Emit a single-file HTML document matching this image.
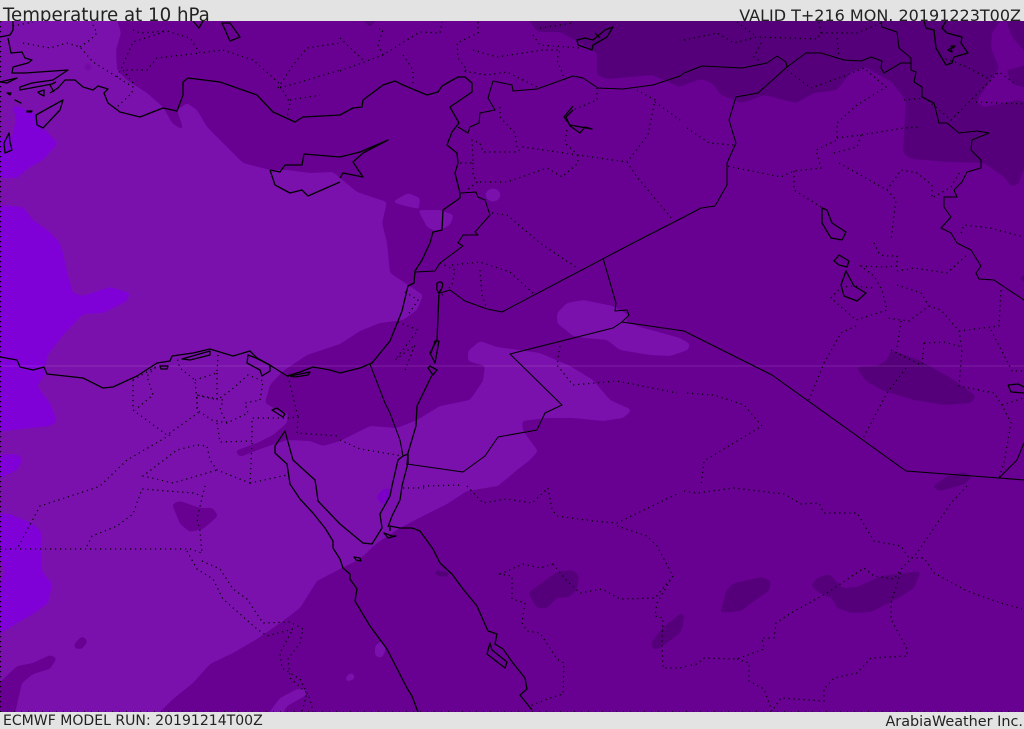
<!DOCTYPE html>
<html><head><meta charset="utf-8"><title>Temperature at 10 hPa</title>
<style>
html,body{margin:0;padding:0;background:#e3e3e3;width:1024px;height:729px;overflow:hidden}
svg{display:block}
text{font-family:"DejaVu Sans","Liberation Sans",sans-serif;fill:#222}
.c{fill:none;stroke:#000;stroke-width:1.3;stroke-linejoin:round}
.t{fill:none;stroke:#000;stroke-width:1.05;stroke-linejoin:round}
.d{fill:none;stroke:#000;stroke-width:1.25;stroke-dasharray:1.2 3.8}
</style></head><body>
<svg width="1024" height="729" viewBox="0 0 1024 729" xmlns="http://www.w3.org/2000/svg">
<defs>
<filter id="s" x="-5%" y="-5%" width="110%" height="110%" color-interpolation-filters="sRGB">
<feGaussianBlur stdDeviation="1.8"/>
<feComponentTransfer><feFuncA type="linear" slope="8" intercept="-3.5"/></feComponentTransfer>
</filter>
</defs>
<rect width="1024" height="729" fill="#e3e3e3"/>
<text x="3" y="21" font-size="18.2">Temperature at 10 hPa</text>
<text x="1021" y="21" font-size="16" text-anchor="end">VALID T+216 MON. 20191223T00Z</text>
<svg x="0" y="21" width="1024" height="691" viewBox="0 21 1024 691">
<rect x="0" y="21" width="1024" height="691" fill="#680092"/>
<!-- dark band -->
<g fill="#55007a" filter="url(#s)">
<polygon points="520,10 538,32 560,32 580,43 597,53 597,75 607,79 630,77 652,75 680,87 684,85 701,79 712,83 721,95 742,103 764,95 796,103 814,93 837,90 851,72 866,67 891,82 906,100 903,153 911,159 951,162 984,163 1004,177 1012,187 1019,183 1034,140 1034,10"/>
<polygon points="355,10 385,10 370,28"/>
<polygon points="1034,270 1018,278 1034,288"/>
<polygon points="891,350 919,360 951,378 976,396 971,403 944,405 914,400 884,391 866,381 856,367 877,366 887,360"/>
<polygon points="932,487 947,476 964,472 972,476 965,484 940,491"/>
<polygon points="720,613 727,589 734,583 762,577 771,581 769,591 754,601 741,611"/>
<polygon points="811,586 817,578 829,574 836,581 842,588 857,587 881,576 921,571 914,588 897,599 871,612 851,613 837,608 832,598 821,594"/>
<polygon points="528,593 540,584 557,572 573,570 579,576 577,589 570,597 557,598 547,608 537,608"/>
<polygon points="651,643 662,628 680,614 684,613 683,625 680,633 660,648 653,650"/>
<polygon points="435,570 449,572 449,577 436,576"/>
</g>
<!-- main colour lobe top right -->
<polygon fill="#680092" filter="url(#s)" points="1004,15 992,33 991,48 999,68 976,102 984,107 1004,103 1017,100 1034,104 1034,90 1012,84 1006,70 1016,68 1034,62 1012,37"/>
<!-- light region -->
<g fill="#7a11ad" filter="url(#s)">
<polygon points="-10,10 114,10 121,33 116,50 117,70 127,80 147,93 163,107 172,123 184,131 177,110 187,103 197,110 207,127 227,147 243,163 270,170 287,170 310,173 333,172 340,178 357,192 387,202 382,223 387,243 390,273 408,285 423,295 417,310 403,320 380,323 360,331 340,344 307,355 283,371 270,385 265,403 277,410 288,413 287,423 273,435 257,443 235,451 240,457 263,448 287,440 310,441 323,446 340,441 370,426 397,428 417,420 440,406 470,400 483,381 485,366 468,361 468,351 480,341 497,347 540,353 570,366 593,380 610,400 632,410 623,418 603,421 573,418 547,418 522,421 523,431 538,451 530,460 517,470 498,486 467,491 447,504 423,516 400,528 377,543 360,559 340,569 317,581 300,608 283,621 257,639 233,653 210,664 193,683 173,699 150,722 -10,722"/>
<polygon points="392,202 408,193 420,198 419,209 405,206"/>
<polygon points="418,210 440,210 454,215 450,225 437,232 427,227"/>
<ellipse cx="493" cy="195" rx="7.5" ry="6.5"/>
<polygon points="557,313 567,303 583,300 613,306 629,315 625,321 640,327 680,338 690,344 688,350 670,356 650,355 620,350 607,340 585,338 573,336 557,323"/>
<polygon points="262,722 280,698 297,689 308,690 305,696 287,706 278,722"/>
<polygon points="375,646 382,640 386,649 382,658 375,656"/>
<polygon points="346,676 353,672 355,679 346,682"/>
</g>
<!-- bright -->
<g fill="#8000d8" filter="url(#s)">
<polygon points="13,105 16,120 12,137 -10,139 -10,178 17,178 30,167 43,160 58,143 43,128 33,112"/>
<polygon points="-10,204 23,207 33,220 50,232 60,243 63,253 68,276 73,293 83,296 110,287 130,293 127,301 103,313 83,314 63,335 47,356 45,375 37,386 50,403 57,421 50,426 20,429 -10,433"/>
<polygon points="-10,455 17,454 23,460 17,470 -10,483"/>
<polygon points="-10,513 10,514 33,524 41,531 42,571 52,584 48,603 33,614 17,623 -10,640"/>
<polygon points="376,497 383,489 391,488 390,499 382,505" fill="#7a00c8"/>
</g>
<polygon points="0,559 5,572 0,584" fill="#7a11ad"/>
<!-- mid blobs on light -->
<g fill="#680092" filter="url(#s)">
<polygon points="172,504 180,501 200,508 213,508 218,516 203,529 190,532 180,524"/>
<polygon points="74,644 82,636 88,641 82,649 75,649"/>
<polygon points="-10,692 17,666 33,663 50,655 57,658 50,669 33,674 22,683 13,722 -10,722"/>
</g>
<ellipse cx="88" cy="67" rx="3.6" ry="3.6" fill="#720ba3"/>
<rect x="0" y="365.5" width="1024" height="1" fill="#fff" opacity=".13"/>
<!-- dotted -->
<g class="d">
<path d="M13,26L33,22M23,43L50,48L67,43L80,47L93,62L117,77L133,87L132,93L117,107M80,47L90,40L97,33L92,23M117,77L122,67L133,42L167,31L190,38L200,53L223,50M133,83L123,70L147,70L157,58L200,53M133,30L140,33L167,31M223,50L253,60L278,82L290,103L287,117M278,88L293,65L307,48L340,43M280,88L307,80L340,70M290,100L320,95"/>
<path d="M340,71L383,55L402,43L420,32L440,33L442,22M383,55L378,45L383,30L377,28M403,55L413,70L413,85M340,38L363,60M478,22L478,33L457,43L458,58L467,70L463,71L487,75L507,72L537,87M473,50L497,57L543,50L560,50L557,60L565,80M533,35L540,45L580,48M540,28L573,23"/>
<path d="M597,88L597,100L573,110M567,130L565,143L578,155L627,162L648,135L655,100L637,90M655,102L680,120M627,162L637,177L673,220M578,155L523,147L517,152L483,152L480,143L472,140L473,163L458,163M473,163L473,175L477,182L467,190M500,107L500,117L515,133L517,147M578,155L578,163L562,177L547,168L507,182L477,182M492,213L507,215L540,243L577,268"/>
<path d="M684,40L717,33L734,43L757,37L817,39L821,33L857,33L881,23M737,22L757,37M761,43L754,57L761,62M819,22L821,33M837,38L839,57M787,70L811,88L847,75L864,68L886,87L857,105L837,123L837,140L816,150L821,168L794,171L781,177L727,166M687,128L709,143L734,145M837,138L861,135L904,128L919,127M834,153L857,147L861,135M839,163L887,190L901,170L917,173L932,185L932,198L951,187L961,170M887,190L896,200L891,240M794,171L794,190L821,207M904,100L925,98L951,120L971,100L999,72L1017,85M976,102L1024,104M941,57L967,67L987,78L999,72M961,233L964,225L990,228L1024,237"/>
<path d="M874,243L879,253L884,256L897,256L897,266L884,267L861,266L874,276L882,290L887,310L856,320L831,298L841,287L854,286L874,288M897,271L914,268L947,273L967,255M897,285L921,293L929,306L909,321L887,318M901,321L897,348M929,306L941,310L959,331L962,350L959,386L994,393L1002,405L1011,423L1004,463L999,478M924,343L944,342L962,347M924,343L922,365M891,350L921,365M959,331L999,326L1001,290M991,330L1012,371L1024,371M856,326L841,333L824,363L809,400M906,368L887,393L862,440M1002,405L1024,398M687,393L714,395L744,405L762,426L704,461L701,486"/>
<path d="M560,346L557,365L573,385L617,381L677,393"/>
<path d="M684,491L697,493L734,488L784,494L801,504L819,503L824,513L857,513L874,541L901,546L909,558L924,558L934,573L967,591L1001,603L1022,609M967,486L951,503L917,553L902,568L891,603L891,619L907,649L907,656L871,658L857,673L834,678L824,689L824,701L781,698L772,711M902,568L894,579L874,576L864,568L827,593L791,613L776,623L774,638L762,638L764,649L737,659L704,658L697,664L687,666M737,659L749,663L749,681L764,689L772,711"/>
<path d="M403,488L425,488M467,486L483,503L507,499L532,503L548,488L552,509L557,516L593,521L617,523L677,494M617,526L647,536L657,546L673,576L657,603L655,616L663,618L662,643L663,668L680,668L687,666M553,564L540,568L523,564L500,574L512,576L512,599L525,603L522,623L527,631L540,633L557,659L564,663L563,694L550,698L530,706M553,564L567,581L580,593L602,589L620,599L655,598L673,576"/>
<path d="M340,440L360,449L403,456M423,486L463,485"/>
<path d="M133,380L133,410L167,435L198,413L195,380L180,368L177,358M133,380L157,366L147,376L153,395L135,410M195,380L217,373L218,355M217,373L217,400L197,395L197,410L212,420L227,423L248,413L245,403L260,400L263,381L248,375L230,391L217,400M197,395L223,400L220,410L227,423M217,423L220,442L252,441L252,418L287,418L298,417L297,433L340,436M288,376L298,417M252,443L250,483L217,470L210,460L207,446L197,445L177,450L143,476L173,483L207,473L217,470M250,483L287,475M170,435L127,460L100,486L95,488L40,506L17,549"/>
<path d="M0,549L190,549L202,553L200,531L197,519L205,486M87,546L92,536L117,526L133,514L142,489L193,493L202,496M187,551L197,569L213,579L223,599L257,629L267,636L293,629L280,653L282,668L300,679L310,699L313,712M202,561L220,569L233,589L247,599L263,623L290,622L303,629L300,643L288,659L290,678L307,693L302,711"/>
<path d="M0.5,21V712"/>
<path d="M405,292L418,300L408,315M398,322L418,330L395,360L415,345L405,370M440,263L455,270L452,285L437,300M452,265L480,262L510,272L535,295M480,270L482,295L487,309"/>
<path d="M0,711.5H1024" stroke-dasharray="1 6" opacity=".6"/>
</g>
<!-- coastlines (heavier) -->
<g class="c">
<path d="M13,21L13,30L10,35L0,37M8,38L11,53L22,52L25,58L32,60L28,63L13,67L12,73L25,73L68,70L53,80L32,83L20,87L20,90L52,84L56,82"/>
<path d="M50,93L58,88L65,80L75,80L83,87L93,90L98,86L108,89L104,93L108,103L120,112L132,115L140,117L163,108L177,111L183,95L183,82L188,78L220,82L257,95L273,112L295,122L303,117L340,115L353,108L362,107L363,100L383,85L395,81L403,85L427,95L438,92L442,86L458,77L465,77L472,83L472,92L450,107L459,123L452,132L450,137L447,145L457,153L458,163L455,173L460,193L460,198L443,210L442,230L433,232L430,243L422,260L415,271L414,283L408,286L402,311L390,341L372,363L360,368L340,373L330,370L313,367L300,372L287,376L273,367L257,358L250,351L233,356L210,349L193,353L172,356L170,361L157,363L137,376L113,387L103,388L83,378L47,374L44,367L33,370L20,367L17,360L0,357"/>
<path d="M182,359L210,351L210,355L190,360ZM160,366L168,366L167,369L161,369ZM248,355L247,363L260,370L262,376L270,371L270,365L256,358ZM290,376L310,372L308,375L295,377Z"/>
<path d="M403,456L398,460L392,486L390,496L380,514L382,528L372,544L363,543L340,524L318,501L316,486L315,480L293,460L285,431L275,446L275,453L287,464L290,484L300,499L313,513L325,528L333,541L333,548L340,559L343,568L350,574L350,579L357,589L355,601L370,626L387,649L407,688L412,696L418,712"/>
<path d="M403,456L408,454L408,463L402,486L400,500L392,516L388,527"/>
<path d="M272,410L283,417L285,414L277,408Z"/>
<path d="M390,531L390,526L400,528L412,528L420,531L433,549L440,563L452,574L463,589L477,606L488,631L497,634L495,644L503,649L513,663L525,678L527,689L520,695L532,710"/>
<path d="M487,654L490,643L492,650L507,662L505,668ZM384,533L392,536L396,536L388,538Z"/>
<path d="M354,557L360,558L361,561L356,560Z"/>
<path d="M270,170L275,185L290,193L302,190L308,196L340,182M270,170L280,172L285,165L302,165L304,154L340,157L360,152L388,140L363,153L353,162L363,177L343,173L340,178"/>
<path d="M36,115L63,100L60,110L43,128L37,125ZM9,133L4,143L5,153L12,150L10,142ZM0,82L17,78L7,83ZM7,93L11,93L10,95ZM15,100L21,103ZM38,92L44,90L44,96L40,94ZM27,111L32,111L31,112L27,112ZM50,85L54,92"/>
<path d="M222,23L230,23L240,37L230,41ZM193,21L199,28L203,21"/>
<path d="M613,27L607,37L593,45L592,50L578,45L577,40L585,38L593,40L605,30ZM595,33L600,38"/>
<path d="M573,106L564,117L570,125L592,129L585,127L580,133L570,126L566,117L573,110"/>
<path d="M822,208L827,210L832,223L846,232L842,240L831,238L822,223Z"/>
<path d="M834,261L839,255L849,261L847,267L839,265ZM846,271L841,285L844,296L857,301L866,293L854,286Z"/>
<path d="M1008,385L1018,384L1024,387M1008,385L1011,392L1024,393"/>
<path d="M924,21L926,28L934,30L936,48L946,65L952,63L954,57L968,53L961,43L962,37L947,33L942,28L946,21"/>
<path d="M948,50L951,48L952,52ZM951,46L955,46L953,48Z"/>
<path d="M439,293L437,340L430,353L435,363L439,341L435,341L431,353M428,368L433,375L437,370L430,366ZM432,375L417,406L416,426L408,453L407,465"/>
<path d="M437,286Q436,282 440,282T442,288L439,293Q436,290 437,286Z"/>
</g>
<!-- land borders (thinner) -->
<g class="t">
<path d="M493,81L488,98L495,110L480,113L479,123L470,127L468,133L458,127M461,193L476,192L478,197L485,200L490,215L475,232L478,235L463,235L458,243L463,246L440,263L435,271L415,272"/>
<path d="M440,293L450,290L465,301L487,309L502,312L633,243L684,217L701,208L715,206L727,185L727,163L736,143L729,120L736,97L758,93L787,67L786,62L777,56L767,63L742,68L702,66L684,73L680,76L653,85L623,89L598,88L583,78L573,76L537,89L513,91L512,85L493,81"/>
<path d="M787,67L806,53L821,53L844,60L861,61L871,57L882,61L881,68L884,73L901,63L911,63L911,70L916,72L914,82L922,87L922,97L934,103L939,123L947,123L959,133L977,131L989,133L972,140L971,150L981,160L981,168L967,172L962,182L954,190L957,197L944,197L944,207L951,217L941,228L951,233L957,243L971,250L981,266L976,273L979,279L994,280L1024,300"/>
<path d="M881,21L882,27L897,32L899,48L911,58L911,63"/>
<path d="M684,331L772,375L906,471L999,478L1024,480M999,478L1017,460L1024,443"/>
<path d="M603,258L616,303L615,311L627,310L629,315L622,322L613,328L510,354L562,405L545,413L537,430L498,437L485,456L463,472L407,464M622,322L684,331"/>
<path d="M370,364L385,403L390,413L400,440L403,456"/>
</g>
</svg>
<text x="3" y="725" font-size="14.05">ECMWF MODEL RUN: 20191214T00Z</text>
<text x="1023" y="726" font-size="14.4" text-anchor="end">ArabiaWeather Inc.</text>
</svg>
</body></html>
